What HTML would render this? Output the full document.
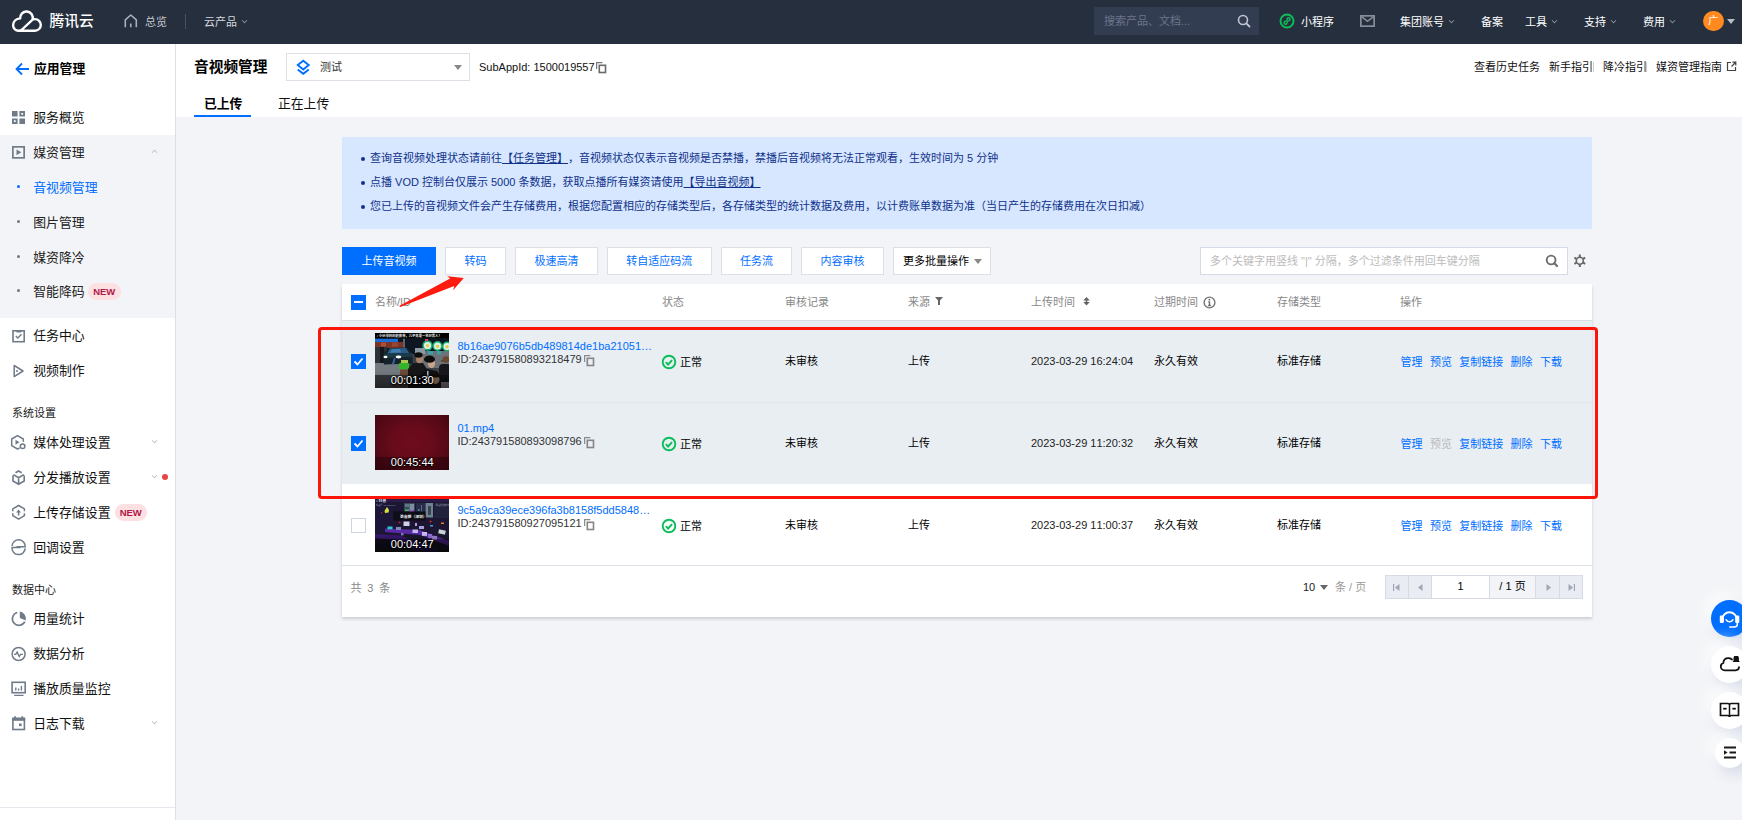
<!DOCTYPE html>
<html lang="zh-CN">
<head>
<meta charset="utf-8">
<title>音视频管理 - 云点播 - 控制台</title>
<style>
*{box-sizing:border-box;margin:0;padding:0}
html,body{width:1742px;height:820px;overflow:hidden}
body{font-family:"Liberation Sans","Noto Sans CJK SC",sans-serif;font-size:12px;color:#000;background:#f3f4f7;position:relative;line-height:1;text-spacing-trim:space-all;font-kerning:none}
a{text-decoration:none;color:#006eff}
.abs{position:absolute}
/* top nav */
#nav{position:absolute;left:0;top:0;width:1742px;height:43.600px;background:#262f3e;color:#fff}
#nav .t{position:absolute;top:0;height:44px;line-height:44px;font-size:11px;color:#e6e8ec;white-space:nowrap}
#nav .brand{font-size:14.700px;font-weight:500;color:#fff;left:49.500px;line-height:43px;letter-spacing:0}
#nav .sep{position:absolute;left:185px;top:14px;width:1px;height:15px;background:#4a5163}
#nav .caret{display:inline-block;width:5px;height:5px;border-right:1px solid #9aa0ad;border-bottom:1px solid #9aa0ad;transform:rotate(45deg) scale(.8);margin-left:5px;position:relative;top:-3px}
#search{position:absolute;left:1094px;top:7px;width:165px;height:28px;background:#333d52;color:#6c7589;font-size:11px;line-height:28px;padding-left:10px}
/* sidebar */
#side{position:absolute;left:0;top:44px;width:176px;height:776px;background:#fff;border-right:1px solid #dcdfe6}
#side .it{position:absolute;left:0;width:175px;height:35px;line-height:34px;font-size:12.900px;color:#111;white-space:nowrap}
#side .it span.tx{position:absolute;left:33.200px;top:0}
#side .it svg{position:absolute;left:11px;top:10px}
#side .grp{position:absolute;left:12px;font-size:11px;color:#222;white-space:nowrap}
#side .dot{position:absolute;left:16.500px;top:14.300px;width:3px;height:3px;background:#777;border-radius:2px}
.new{position:absolute;height:17px;border-radius:8.500px;background:#fce0e2;color:#b01848;font-size:9.500px;font-weight:bold;line-height:17px;text-align:center}
.chev{position:absolute;left:152px;top:12px;width:5px;height:5px;border-right:1.200px solid #b3b8c1;border-bottom:1.200px solid #b3b8c1;transform:rotate(45deg) scale(.8)}
/* header */
#hd{position:absolute;left:176px;top:44px;width:1566px;height:72.500px;background:#fff}
#hd .title{position:absolute;left:18px;top:13px;font-size:14.700px;font-weight:bold;color:#000;line-height:20px}
#sel{position:absolute;left:110px;top:9px;width:184px;height:28px;border:1px solid #dcdfe6;background:#fff}
#hd .tab{position:absolute;top:51px;font-size:12.800px;line-height:18px;color:#111}
#hd .lnk{position:absolute;top:16px;font-size:11px;line-height:14px;color:#111;white-space:nowrap}
</style>
</head>
<body>
<div id="nav">
  <svg class="abs" style="left:0;top:0" width="50" height="44" viewBox="0 0 50 44"><path d="M18.500 30.700H35A5.800 5.800 0 0 0 35 19.100C34 19.100 33.200 19.300 32.500 19.600A6.300 6.300 0 1 0 20.200 18.400C16.500 18.800 13.100 21.300 13.100 25.300A5.400 5.400 0 0 0 18.500 30.700C20.500 30.700 21.600 30 22.600 29L31.800 20.300" fill="none" stroke="#fff" stroke-width="2.400" stroke-linecap="round" stroke-linejoin="round"/></svg>
  <div class="t brand">腾讯云</div>
  <svg class="abs" style="left:120px;top:10px" width="22" height="22" viewBox="120 10 22 22"><path d="M125.300 27.200V19.800L130.800 15l5.500 4.800v7.400" fill="none" stroke="#a9afbb" stroke-width="1.600" stroke-linejoin="round"/><path d="M130.800 23.500v3.700" stroke="#a9afbb" stroke-width="1.600"/></svg>
  <div class="t" style="left:145px;font-size:11px;color:#c5c9d1">总览</div>
  <div class="sep"></div>
  <div class="t" style="left:204px;font-size:11px;color:#d5d8de">云产品<i class="caret"></i></div>
  <div id="search">搜索产品、文档...</div>
  <svg class="abs" style="left:1237px;top:14px" width="14" height="14" viewBox="0 0 14 14"><circle cx="6" cy="6" r="4.500" fill="none" stroke="#c0c5cf" stroke-width="1.600"/><path d="M9.300 9.300l3.200 3.200" stroke="#c0c5cf" stroke-width="1.800" stroke-linecap="round"/></svg>
  <svg class="abs" style="left:1278.500px;top:12.900px" width="16" height="16" viewBox="0 0 16 16"><circle cx="8" cy="8" r="6.500" fill="none" stroke="#0cbe58" stroke-width="1.900"/><path d="M9.600 7.800a1.500 1.500 0 1 0-1.500-1.500v3.400a1.500 1.500 0 1 1-1.500-1.500" fill="none" stroke="#0cbe58" stroke-width="1.400" stroke-linecap="round"/></svg>
  <div class="t" style="left:1301px;color:#fff">小程序</div>
  <svg class="abs" style="left:1360px;top:15px" width="15" height="12" viewBox="0 0 15 12"><rect x=".85" y=".85" width="13.300" height="10.300" fill="none" stroke="#858d99" stroke-width="1.700"/><path d="M1.500 1.700l6 4.600 6-4.600" fill="none" stroke="#858d99" stroke-width="1.600"/></svg>
  <div class="t" style="left:1400px;color:#fff">集团账号<i class="caret"></i></div>
  <div class="t" style="left:1481px;color:#fff">备案</div>
  <div class="t" style="left:1525px;color:#fff">工具<i class="caret"></i></div>
  <div class="t" style="left:1584px;color:#fff">支持<i class="caret"></i></div>
  <div class="t" style="left:1643px;color:#fff">费用<i class="caret"></i></div>
  <div class="abs" style="left:1703px;top:10.500px;width:20.500px;height:20.500px;border-radius:11px;background:#ff8a1f;color:#fff;font-size:10px;line-height:20px;text-align:center">广</div>
  <div class="abs" style="left:1727px;top:19px;width:0;height:0;border-left:4px solid transparent;border-right:4px solid transparent;border-top:5px solid #b9bdc7"></div>
</div>

<div id="side">
  <svg class="abs" style="left:0;top:0;z-index:2" width="40" height="776" viewBox="0 44 40 776">
    <g fill="#6f7b88" stroke="none">
      <path fill-rule="evenodd" d="M12 111h5.600v5.600H12zM19.400 111H25v5.600h-5.600zM21.300 112.900v1.800h1.800v-1.800zM12 118.400h5.600V124H12zM13.900 120.300v1.800h1.800v-1.800zM19.400 118.400H25V124h-5.600z"/>
      <path d="M16.500 149.500v5.700l4.800-2.850z"/>
      <rect x="16.400" y="330" width="5.200" height="2.400"/>
      <circle cx="17" cy="371" r="1"/>
      <path d="M15.500 439.800v5l4-2.500z"/>
      <path d="M16.200 512.400l2.400-2.900 2.400 2.900z"/>
      <path d="M19.800 611.600a7.200 7.200 0 0 1 6 8.800l-6-2.500z"/>
      <rect x="12.100" y="717.700" width="13.100" height="3.100"/>
      <rect x="14.100" y="716.300" width="1.800" height="3"/>
      <rect x="21.400" y="716.300" width="1.800" height="3"/>
      <rect x="19" y="723.500" width="2.600" height="2.600"/>
    </g>
    <g fill="none" stroke="#6f7b88" stroke-width="1.600">
      <rect x="12.850" y="146.850" width="11.300" height="11" stroke-width="1.700"/>
      <rect x="13" y="330.800" width="11.200" height="10.900"/>
      <path d="M15.800 336l2 2 3.700-3.700" stroke-width="1.400"/>
      <path d="M14.200 365.500v11.100L23 371z" stroke-width="1.500" stroke-linejoin="round"/>
      <path d="M19.600 448L17.500 449l-5.800-3.300V439l5.800-3.300 5.800 3.300v2.700" stroke-width="1.500" stroke-linejoin="round"/>
      <circle cx="22.600" cy="446.300" r="2.300" stroke-width="1.500"/>
      <path d="M15.500 472.800l3.100-1.800 3.100 1.800M13 475.500V481l5.600 3.300 5.600-3.300v-5.500M13.400 474.600l5.200 3.100 5.200-3.100M18.600 477.700V484"/>
      <path d="M12.800 511.300v-2.400l5.800-3.400 5.800 3.400v2.400M24.400 513.300v2.400l-5.800 3.400-5.800-3.400v-2.400" stroke-width="1.500" stroke-linejoin="round"/>
      <path d="M18.600 515.600v-4" stroke-width="1.500"/>
      <path d="M12 546a6.600 6.600 0 0 1 13.200.8H16.500M25.200 548.400a6.600 6.600 0 0 1-13.200-.8h8.700" stroke-width="1.500"/>
      <path d="M17.200 612.600a6.500 6.500 0 1 0 7.600 9"/>
      <circle cx="18.600" cy="654" r="6.500" stroke-width="1.500"/>
      <path d="M14 654.300h1.800l1.300-2.300 2.200 4.600 1.300-2.300h2.400" stroke-width="1.300"/>
      <rect x="12.100" y="682.300" width="13.100" height="10.400"/>
      <path d="M14.200 695.400h9.300M15.800 690.600v-3M18.600 690.600v-2M21.400 690.600v-4.600" stroke-width="1.400"/>
      <rect x="12.900" y="718.500" width="11.500" height="11"/>
    </g>
  </svg>
  <svg class="abs" style="left:14.500px;top:18px" width="15" height="14" viewBox="0 0 15 14"><path d="M7 1.500L1.500 7 7 12.500M1.500 7H14" fill="none" stroke="#006eff" stroke-width="1.800"/></svg>
  <div class="abs" style="left:34px;top:16px;font-size:12.800px;font-weight:bold;line-height:18px;color:#000">应用管理</div>

  <div class="it" style="top:56.600px"><span class="tx">服务概览</span></div>
  <div class="abs" style="left:0;top:90.700px;width:175px;height:183.500px;background:#f3f4f7"></div>
  <div class="it" style="top:91.600px"><span class="tx" style="color:#222">媒资管理</span><i class="chev" style="transform:rotate(225deg) scale(.8);top:14.500px"></i></div>
  <div class="it" style="top:126.600px"><i class="dot" style="background:#006eff"></i><span class="tx" style="color:#006eff">音视频管理</span></div>
  <div class="it" style="top:161.600px"><i class="dot"></i><span class="tx" style="color:#222">图片管理</span></div>
  <div class="it" style="top:196.600px"><i class="dot"></i><span class="tx" style="color:#222">媒资降冷</span></div>
  <div class="it" style="top:231px"><i class="dot"></i><span class="tx" style="color:#222">智能降码</span><span class="new" style="left:88px;top:8.200px;width:32.500px">NEW</span></div>

  <div class="it" style="top:275px"><span class="tx">任务中心</span></div>
  <div class="it" style="top:310px"><span class="tx">视频制作</span></div>

  <div class="grp" style="top:364px">系统设置</div>
  <div class="it" style="top:382px"><span class="tx">媒体处理设置</span><i class="chev"></i></div>
  <div class="it" style="top:417px"><span class="tx">分发播放设置</span><i class="chev"></i><i class="abs" style="left:162px;top:13.200px;width:5.800px;height:5.800px;border-radius:3px;background:#e54545"></i></div>
  <div class="it" style="top:452px"><span class="tx">上传存储设置</span><span class="new" style="left:114.500px;top:8.200px;width:32.500px">NEW</span></div>
  <div class="it" style="top:487px"><span class="tx">回调设置</span></div>

  <div class="grp" style="top:540.700px">数据中心</div>
  <div class="it" style="top:558px"><span class="tx">用量统计</span></div>
  <div class="it" style="top:593px"><span class="tx">数据分析</span></div>
  <div class="it" style="top:628px"><span class="tx">播放质量监控</span></div>
  <div class="it" style="top:663px"><span class="tx">日志下载</span><i class="chev"></i></div>
  <div class="abs" style="left:0;top:763px;width:175px;height:1px;background:#e6e8ed"></div>
</div>

<div id="hd">
  <div class="title">音视频管理</div>
  <div id="sel">
    <svg class="abs" style="left:8.300px;top:4.600px" width="16.500" height="16.500" viewBox="0 0 15 15"><path d="M7.500 1.500l5 4-5 4-5-4z" fill="none" stroke="#006eff" stroke-width="1.700" stroke-linejoin="miter"/><path d="M2.500 9.500l5 4 5-4" fill="none" stroke="#006eff" stroke-width="1.700"/></svg>
    <div class="abs" style="left:33px;top:6px;font-size:11px;line-height:14px;color:#333">测试</div>
    <div class="abs" style="left:167px;top:10.800px;width:0;height:0;border-left:4px solid transparent;border-right:4px solid transparent;border-top:5px solid #888"></div>
  </div>
  <div class="abs" style="left:303px;top:16px;font-size:11px;line-height:14px;color:#111;white-space:nowrap">SubAppId: 1500019557</div>
  <svg class="abs" style="left:420px;top:17.700px" width="11" height="12" viewBox="0 0 11 12"><path d="M.6 7V.6H6.300" fill="none" stroke="#777" stroke-width="1.200"/><rect x="3.300" y="3.300" width="6.200" height="7.200" fill="none" stroke="#6a6a6a" stroke-width="1.600"/></svg>
  <div class="tab" style="left:28px;font-weight:bold;color:#000">已上传</div>
  <div class="abs" style="left:18px;top:70.500px;width:57px;height:2.500px;background:#006eff"></div>
  <div class="tab" style="left:102px">正在上传</div>
  <div class="lnk" style="left:1298px">查看历史任务</div>
  <div class="lnk" style="left:1373px">新手指引</div>
  <div class="lnk" style="left:1427px">降冷指引</div>
  <div class="lnk" style="left:1480px">媒资管理指南</div>
  <div class="abs" style="left:1417px;top:18px;width:1px;height:10px;background:#ccc"></div>
  <div class="abs" style="left:1470px;top:18px;width:1px;height:10px;background:#ccc"></div>
  <svg class="abs" style="left:1550px;top:17px" width="11" height="11" viewBox="0 0 11 11"><path d="M5 1.500H1.500v8h8V6" fill="none" stroke="#444" stroke-width="1.200"/><path d="M6.500 1.200h3.300v3.300M9.500 1.500L5.500 5.500" fill="none" stroke="#444" stroke-width="1.200"/></svg>
</div>


<style>
#notice{position:absolute;left:342px;top:137px;width:1250px;height:91.500px;background:#d6e7ff;color:#12368f;font-size:11px}
#notice .ln{position:absolute;left:28px;line-height:14px;white-space:nowrap;color:#10318a}
#notice .ln:before{content:"";position:absolute;left:-9px;top:5.500px;width:4px;height:4px;border-radius:2px;background:#10318a}
#notice u{text-decoration:underline}
.btn{position:absolute;top:247px;height:28px;border:1px solid #dcdfe6;background:#fff;color:#006eff;font-size:11px;line-height:26px;text-align:center;white-space:nowrap}
#tbl{position:absolute;left:342px;top:284px;width:1250px;height:333px;background:#fff;box-shadow:0 2px 3px rgba(0,0,0,.16)}
.th{position:absolute;top:295px;font-size:11px;line-height:14px;color:#888;white-space:nowrap}
.row{position:absolute;left:342px;width:1250px}
.c{position:absolute;font-size:11px;line-height:14px;color:#000;white-space:nowrap}
.lk{color:#006eff}
.thumb{position:absolute;left:375px;width:74px;height:55px;overflow:hidden;background:#111}
.thumb .tm{position:absolute;left:0;bottom:0;width:74px;height:13.500px;background:rgba(0,0,0,.3);color:#fff;font-size:11px;line-height:11px;text-align:center;text-shadow:0 0 1px #000,0 0 2px #000,0 1px 1px #000;padding-left:.5px}
.cb{position:absolute;left:351px;width:15px;height:15px;background:#006eff}
.cp{position:absolute}
</style>
<div id="notice">
  <div class="ln" style="top:14px">查询音视频处理状态请前往<u>【任务管理】</u>，音视频状态仅表示音视频是否禁播，禁播后音视频将无法正常观看，生效时间为 5 分钟</div>
  <div class="ln" style="top:38px">点播 VOD 控制台仅展示 5000 条数据，获取点播所有媒资请使用<u>【导出音视频】</u></div>
  <div class="ln" style="top:62px">您已上传的音视频文件会产生存储费用，根据您配置相应的存储类型后，各存储类型的统计数据及费用，以计费账单数据为准（当日产生的存储费用在次日扣减）</div>
</div>

<div class="btn" style="left:342px;width:94px;background:#006eff;border-color:#006eff;color:#fff">上传音视频</div>
<div class="btn" style="left:445px;width:61px">转码</div>
<div class="btn" style="left:515px;width:83px">极速高清</div>
<div class="btn" style="left:607px;width:104.500px">转自适应码流</div>
<div class="btn" style="left:721px;width:71px">任务流</div>
<div class="btn" style="left:801px;width:83px">内容审核</div>
<div class="btn" style="left:893px;width:98px;color:#000;text-align:left;padding-left:9px">更多批量操作<i class="abs" style="left:80px;top:11px;width:0;height:0;border-left:4px solid transparent;border-right:4px solid transparent;border-top:5px solid #888"></i></div>

<div class="abs" style="left:1200px;top:247px;width:368px;height:28px;border:1px solid #d5dbe6;background:#fff;color:#bbb;font-size:11px;line-height:26px;padding-left:9px;white-space:nowrap">多个关键字用竖线 "|" 分隔，多个过滤条件用回车键分隔</div>
<svg class="abs" style="left:1545px;top:254px" width="14" height="14" viewBox="0 0 14 14"><circle cx="6.100" cy="6" r="4.400" fill="none" stroke="#6e6e6e" stroke-width="1.900"/><path d="M9.300 9.300l2.800 2.800" stroke="#6e6e6e" stroke-width="2.100" stroke-linecap="round"/></svg>
<svg class="abs" style="left:1572px;top:253px" width="16" height="16" viewBox="0 0 16 16"><g fill="none" stroke="#666" stroke-width="1.600"><circle cx="7.800" cy="7.800" r="3.500"/><path d="M7.800 1.600v2.400M7.800 11.600v2.400M2.400 4.700l2.100 1.200M11.100 9.700l2.100 1.200M2.400 10.900l2.100-1.200M11.100 5.900l2.100-1.200" stroke-width="2"/></g></svg>

<div id="tbl"></div>
<div class="abs" style="left:342px;top:319.500px;width:1250px;height:1px;background:#d9dde4"></div>
<div class="cb" style="top:294.700px"><i class="abs" style="left:3px;top:6px;width:9px;height:2px;background:#fff"></i></div>
<div class="th" style="left:375px">名称/ID</div>
<div class="th" style="left:662px">状态</div>
<div class="th" style="left:785px">审核记录</div>
<div class="th" style="left:908px">来源</div>
<svg class="abs" style="left:935px;top:296.500px" width="8" height="8" viewBox="0 0 8 8"><path d="M0 0h8L5 3.500V8H3V3.500z" fill="#666"/></svg>
<div class="th" style="left:1031px">上传时间</div>
<svg class="abs" style="left:1083px;top:297px" width="7" height="9" viewBox="0 0 7 9"><path d="M3.500 0L6.800 3.600H.2zM3.500 8.600L.2 5h6.600z" fill="#666"/><path d="M3.500 2v5" stroke="#666" stroke-width="1.600"/></svg>
<div class="th" style="left:1154px">过期时间</div>
<svg class="abs" style="left:1203px;top:295.500px" width="13" height="13" viewBox="0 0 13 13"><circle cx="6.500" cy="6.500" r="5.400" fill="none" stroke="#777" stroke-width="1.400"/><path d="M6.500 5.600v4M5.300 5.900h1.200M5.200 9.500h2.600" stroke="#666" stroke-width="1.300"/><circle cx="6.400" cy="3.700" r=".9" fill="#666"/></svg>
<div class="th" style="left:1277px">存储类型</div>
<div class="th" style="left:1400px">操作</div>
<div class="row" style="top:321px;height:81.5px;background:#e9eef3"></div>
<div class="cb" style="top:354px"><svg class="abs" style="left:2px;top:3px" width="11" height="9" viewBox="0 0 11 9"><path d="M1.500 4.500l3 3 5-6" fill="none" stroke="#fff" stroke-width="1.800"/></svg></div>
<div class="thumb" style="top:333px"><svg class="abs" style="left:0;top:0" width="74" height="55" viewBox="0 0 74 55">
<defs><filter id="b1" x="-5%" y="-5%" width="110%" height="110%"><feGaussianBlur stdDeviation=".55"/></filter>
<linearGradient id="g1" x1="0" y1="0" x2="0" y2="1"><stop offset="0" stop-color="#000" stop-opacity="0"/><stop offset="1" stop-color="#000" stop-opacity=".35"/></linearGradient>
<clipPath id="c1"><rect width="74" height="55"/></clipPath></defs>
<g clip-path="url(#c1)"><g filter="url(#b1)">
<rect width="74" height="55" fill="#3c4349"/>
<rect y="5" width="74" height="16" fill="#0c1420"/>
<rect x="0" y="5.600" width="23" height="3.600" fill="#1c6ed8"/>
<rect x="0" y="9" width="29" height="6" fill="#7a3426"/><rect x="6" y="9.500" width="5" height="4" fill="#a85034"/><rect x="17" y="9.500" width="6" height="4" fill="#9a4630"/>
<rect x="28" y="5.500" width="2" height="12" fill="#5a6470"/>
<rect x="45" y="18" width="29" height="17" fill="#6c7278"/>
<rect x="0" y="14" width="12" height="18" fill="#2a3138"/>
<rect x="5" y="14" width="4" height="17" fill="#15191d"/>
<circle cx="52.500" cy="12.500" r="5.200" fill="#18b070"/><circle cx="52.500" cy="12.500" r="3.600" fill="#dff2ea"/><circle cx="52.500" cy="12.800" r="1.800" fill="#e8cc50"/><rect x="50" y="6" width="3" height="2" fill="#e04060"/>
<circle cx="62.500" cy="13" r="5" fill="#18b070"/><circle cx="62.500" cy="13" r="3.500" fill="#dff2ea"/><circle cx="62.500" cy="13.300" r="1.800" fill="#e8cc50"/>
<circle cx="72" cy="13.500" r="5" fill="#18b070"/><circle cx="72" cy="13.500" r="3.500" fill="#dff2ea"/><circle cx="72" cy="13.800" r="1.800" fill="#e8cc50"/>
<rect x="53" y="18" width="5" height="3.500" fill="#3aa0a8"/><rect x="62" y="18" width="4" height="3.500" fill="#3aa0a8"/>
<rect x="40" y="15" width="10" height="6" fill="#8c98a4"/>
<rect x="66" y="27" width="5" height="1.500" fill="#4a4030"/>
<rect x="0" y="30" width="34" height="13" fill="#737a80"/>
<rect x="0" y="42" width="34" height="13" fill="#4c5054"/>
<path d="M8 21l6-6 18-.5 5 5 1 11-29 1z" fill="#13242c"/><path d="M9 21l28-1 .5 4-29 1z" fill="#1d3a4a"/>
<path d="M15 15.500l16-.5 3 5-22 .5z" fill="#2c5c86"/><path d="M17 16.200l8-.3 1 3.500-11 .3z" fill="#3f7fb5"/>
<ellipse cx="10.500" cy="24" rx="2" ry="1.200" fill="#fff"/><ellipse cx="23.500" cy="24" rx="2.800" ry="1.400" fill="#fff"/>
<path d="M17 31l2-6h1.500l-1.500 6z" fill="#3a6ab0"/>
<rect x="26" y="27" width="7" height="4" fill="#a8c850"/><rect x="24" y="30" width="10" height="6.500" rx="1" fill="#35b52c"/><rect x="25" y="36.500" width="8" height="6" fill="#6a4a38"/>
<path d="M33 55V36l5-6h10l4 6v19z" fill="#141618"/>
<ellipse cx="44.500" cy="26" rx="3.500" ry="4.200" fill="#a8836a"/><ellipse cx="43.500" cy="22" rx="4.200" ry="2.800" fill="#101010"/>
<path d="M44 55l2-15 6-4 10 2 4 6v11z" fill="#101214"/><rect x="52" y="38" width="1.500" height="7" fill="#b0b8c0"/>
<ellipse cx="56.500" cy="30.500" rx="3.600" ry="4.600" fill="#c8a48a"/><ellipse cx="54.500" cy="26.200" rx="5.500" ry="3.600" fill="#0c0c0c"/>
<rect x="64" y="31" width="12" height="20" rx="4" fill="#14161c"/><ellipse cx="71" cy="26.500" rx="3.500" ry="3.200" fill="#6a4a30"/>
<ellipse cx="60.500" cy="46.500" rx="4" ry="4.500" fill="#b89078"/><ellipse cx="60.500" cy="42.500" rx="4.200" ry="2" fill="#181210"/>
<rect x="66" y="49" width="8" height="6" fill="#8a8088"/>
<ellipse cx="24" cy="50" rx="9" ry="6" fill="#4a3e3c"/>
<rect y="38" width="74" height="17" fill="url(#g1)"/>
</g>
<rect width="74" height="5.300" fill="#000"/>
<text x="1.500" y="4.200" font-family="Liberation Sans,Noto Sans CJK SC,sans-serif" font-size="3.300" font-weight="bold" fill="#f4f4f4">♪ 小伙带妈妈逛夜市，儿子竟是一名好男人！</text>
</g></svg><div class="tm">00:01:30</div></div>
<div class="c lk" style="left:457.500px;top:339px">8b16ae9076b5db489814de1ba21051…</div>
<div class="c" style="left:457.500px;top:352px;color:#333">ID:243791580893218479</div>
<svg class="cp" style="left:584px;top:354.8px" width="11" height="12" viewBox="0 0 11 12"><path d="M.6 7V.6H6.300" fill="none" stroke="#8a8a8a" stroke-width="1.200"/><rect x="3.300" y="3.300" width="6.200" height="7.200" fill="none" stroke="#858585" stroke-width="1.600"/></svg>
<svg class="abs" style="left:661.200px;top:353.6px" width="16" height="16" viewBox="0 0 16 16"><circle cx="8" cy="8" r="6.300" fill="none" stroke="#0abf5b" stroke-width="1.900"/><path d="M4.800 8.200l2.300 2.300 4-4.400" fill="none" stroke="#0abf5b" stroke-width="1.900"/></svg>
<div class="c" style="left:680px;top:355px">正常</div>
<div class="c" style="left:785px;top:354px">未审核</div>
<div class="c" style="left:908px;top:354px">上传</div>
<div class="c" style="left:1031px;top:354px;color:#222">2023-03-29 16:24:04</div>
<div class="c" style="left:1154px;top:354px">永久有效</div>
<div class="c" style="left:1277px;top:354px">标准存储</div>
<div class="c lk" style="left:1400.4px;top:355px">管理</div>
<div class="c lk" style="left:1430px;top:355px">预览</div>
<div class="c lk" style="left:1459.3px;top:355px">复制链接</div>
<div class="c lk" style="left:1510.6px;top:355px">删除</div>
<div class="c lk" style="left:1540px;top:355px">下载</div>
<div class="abs" style="left:342px;top:401.500px;width:1250px;height:1px;background:#e1e5ec"></div>
<div class="row" style="top:402.5px;height:81.2px;background:#e9eef3"></div>
<div class="cb" style="top:436px"><svg class="abs" style="left:2px;top:3px" width="11" height="9" viewBox="0 0 11 9"><path d="M1.500 4.500l3 3 5-6" fill="none" stroke="#fff" stroke-width="1.800"/></svg></div>
<div class="thumb" style="top:415px"><div class="abs" style="left:0;top:0;width:74px;height:55px;background:radial-gradient(ellipse 75% 85% at 50% 50%,#6e0c1d 0,#680b1b 35%,#4f0814 75%,#35050d 100%)"></div><div class="tm">00:45:44</div></div>
<div class="c lk" style="left:457.500px;top:421px">01.mp4</div>
<div class="c" style="left:457.500px;top:434px;color:#333">ID:243791580893098796</div>
<svg class="cp" style="left:584px;top:436.8px" width="11" height="12" viewBox="0 0 11 12"><path d="M.6 7V.6H6.300" fill="none" stroke="#8a8a8a" stroke-width="1.200"/><rect x="3.300" y="3.300" width="6.200" height="7.200" fill="none" stroke="#858585" stroke-width="1.600"/></svg>
<svg class="abs" style="left:661.200px;top:435.6px" width="16" height="16" viewBox="0 0 16 16"><circle cx="8" cy="8" r="6.300" fill="none" stroke="#0abf5b" stroke-width="1.900"/><path d="M4.800 8.200l2.300 2.300 4-4.400" fill="none" stroke="#0abf5b" stroke-width="1.900"/></svg>
<div class="c" style="left:680px;top:437px">正常</div>
<div class="c" style="left:785px;top:436px">未审核</div>
<div class="c" style="left:908px;top:436px">上传</div>
<div class="c" style="left:1031px;top:436px;color:#222">2023-03-29 11:20:32</div>
<div class="c" style="left:1154px;top:436px">永久有效</div>
<div class="c" style="left:1277px;top:436px">标准存储</div>
<div class="c lk" style="left:1400.4px;top:437px">管理</div>
<div class="c lk" style="left:1430px;top:437px;color:#bbb">预览</div>
<div class="c lk" style="left:1459.3px;top:437px">复制链接</div>
<div class="c lk" style="left:1510.6px;top:437px">删除</div>
<div class="c lk" style="left:1540px;top:437px">下载</div>
<div class="cb" style="top:518px;background:#fff;border:1px solid #cfd5de"></div>
<div class="thumb" style="top:497px"><svg class="abs" style="left:0;top:0" width="74" height="55" viewBox="0 0 74 55">
<defs><filter id="b3" x="-5%" y="-5%" width="110%" height="110%"><feGaussianBlur stdDeviation=".55"/></filter>
<linearGradient id="g3" x1="0" y1="0" x2="0" y2="1"><stop offset="0" stop-color="#000" stop-opacity="0"/><stop offset="1" stop-color="#000" stop-opacity=".7"/></linearGradient>
<clipPath id="c3"><rect width="74" height="55"/></clipPath></defs>
<g clip-path="url(#c3)"><g filter="url(#b3)">
<rect width="74" height="55" fill="#1c1630"/>
<rect y="0" width="74" height="5" fill="#2a1e4a"/>
<rect x="0" y="5" width="18" height="30" fill="#1e1838"/>
<rect x="29" y="6" width="11" height="10" fill="#3c4660"/><rect x="30" y="7" width="4" height="3" fill="#5a7880"/><rect x="34.500" y="7" width="4.500" height="6" fill="#7a90a0"/><rect x="30" y="12.500" width="4" height="1.500" fill="#40c060"/><rect x="34.500" y="13" width="4" height="2" fill="#a050c0"/>
<rect x="41" y="6" width="9" height="12" fill="#2a2a48"/><rect x="46" y="8" width="1" height="8" fill="#5a60a0"/><rect x="43" y="12" width="1.500" height="2" fill="#30a070"/>
<rect x="50.500" y="6" width="7.500" height="14.500" fill="#6e8494"/><rect x="53" y="9" width="3" height="9" fill="#3a4450"/>
<rect x="59" y="6" width="15" height="15" fill="#22203c"/>
<path d="M9.500 14l2.500-4 2 3-.5 2.500-3.500.5z" fill="#d8e040"/>
<circle cx="6.500" cy="16" r=".7" fill="#e02030"/>
<rect x="18.500" y="14.500" width="32" height="9" fill="#0e0c16"/>
<circle cx="24.500" cy="25.500" r="1" fill="#c02020"/><circle cx="55.500" cy="24.500" r="1" fill="#d03020"/><rect x="66" y="25.500" width="3" height="1.500" fill="#e08030"/><rect x="55" y="28" width="3" height="1.500" fill="#40a0d0"/>
<path d="M10 31.500l35 1.500 29 11v5L45 38l-35-3z" fill="#5a2aa8"/>
<path d="M0 37l25 1.500L62 53v2H40L20 42.500 0 41z" fill="#3a1a78"/>
<rect x="12.500" y="29.500" width="5" height="2.800" fill="#30c8d0"/>
<rect x="21" y="30" width="5" height="3" fill="#8088c0"/>
<rect x="28.500" y="24.500" width="6" height="4.500" fill="#d0d0e8"/><rect x="40" y="26" width="2" height="3" fill="#b0a0e0"/>
<rect x="37.500" y="32.500" width="5.500" height="3.500" fill="#c0b8e8"/><rect x="44" y="29" width="5" height="3" fill="#a8a0d8"/>
<rect x="47" y="35" width="5" height="4" fill="#c8c0f0"/><rect x="53" y="37" width="4" height="4" fill="#9878e0"/>
<rect x="57" y="39" width="5" height="4" fill="#a890e0"/>
<rect x="63.500" y="33" width="7" height="4" fill="#c4d4d4" transform="rotate(12 67 35)"/>
<rect x="26" y="36" width="2.500" height="2.500" fill="#8078c0"/>
<rect y="36" width="74" height="19" fill="url(#g3)"/>
</g>
<text x="1" y="4.700" font-family="Liberation Sans,Noto Sans CJK SC,sans-serif" font-size="3.600" font-weight="bold" fill="#e8e8f0">♪ 抖音</text>
<text x="1" y="8.600" font-family="Liberation Sans,Noto Sans CJK SC,sans-serif" font-size="2.200" fill="#9a98b0">抖音号: 1047166714</text>
<text x="60.500" y="9" font-family="Liberation Sans,Noto Sans CJK SC,sans-serif" font-size="2.400" fill="#8a88a0">录音棚控制室</text>
<text x="25" y="21" font-family="Liberation Sans,Noto Sans CJK SC,sans-serif" font-size="3.800" font-weight="bold" fill="#f0f0f0">录音棚（深圳）</text>
</g></svg><div class="tm">00:04:47</div></div>
<div class="c lk" style="left:457.500px;top:503px">9c5a9ca39ece396fa3b8158f5dd5848…</div>
<div class="c" style="left:457.500px;top:516px;color:#333">ID:243791580927095121</div>
<svg class="cp" style="left:584px;top:518.8px" width="11" height="12" viewBox="0 0 11 12"><path d="M.6 7V.6H6.300" fill="none" stroke="#8a8a8a" stroke-width="1.200"/><rect x="3.300" y="3.300" width="6.200" height="7.200" fill="none" stroke="#858585" stroke-width="1.600"/></svg>
<svg class="abs" style="left:661.200px;top:517.6px" width="16" height="16" viewBox="0 0 16 16"><circle cx="8" cy="8" r="6.300" fill="none" stroke="#0abf5b" stroke-width="1.900"/><path d="M4.800 8.200l2.300 2.300 4-4.400" fill="none" stroke="#0abf5b" stroke-width="1.900"/></svg>
<div class="c" style="left:680px;top:519px">正常</div>
<div class="c" style="left:785px;top:518px">未审核</div>
<div class="c" style="left:908px;top:518px">上传</div>
<div class="c" style="left:1031px;top:518px;color:#222">2023-03-29 11:00:37</div>
<div class="c" style="left:1154px;top:518px">永久有效</div>
<div class="c" style="left:1277px;top:518px">标准存储</div>
<div class="c lk" style="left:1400.4px;top:519px">管理</div>
<div class="c lk" style="left:1430px;top:519px">预览</div>
<div class="c lk" style="left:1459.3px;top:519px">复制链接</div>
<div class="c lk" style="left:1510.6px;top:519px">删除</div>
<div class="c lk" style="left:1540px;top:519px">下载</div>
<div class="abs" style="left:342px;top:565px;width:1250px;height:1px;background:#dcdfe6"></div>
<div class="c" style="left:350.500px;top:581px;color:#888;letter-spacing:1.400px">共 3 条</div>
<div class="c" style="left:1303px;top:579.500px;color:#222">10</div>
<i class="abs" style="left:1320px;top:585px;width:0;height:0;border-left:4px solid transparent;border-right:4px solid transparent;border-top:5px solid #666"></i>
<div class="c" style="left:1335px;top:579.500px;color:#999">条 / 页</div>
<div class="abs" style="left:1385px;top:575px;width:198px;height:24px;border:1px solid #d5dae3;background:#e9edf3"></div>
<div class="abs" style="left:1408px;top:576px;width:1px;height:22px;background:#d5dae3"></div>
<div class="abs" style="left:1431px;top:576px;width:59px;height:22px;background:#fff;border-left:1px solid #d5dae3;border-right:1px solid #d5dae3;font-size:11px;line-height:21px;text-align:center;color:#000">1</div>
<div class="abs" style="left:1490px;top:576px;width:46px;height:22px;background:#f2f4f8;border-right:1px solid #d5dae3;font-size:11px;line-height:21px;text-align:center;color:#000">/ 1 页</div>
<div class="abs" style="left:1559px;top:576px;width:1px;height:22px;background:#d5dae3"></div>
<svg class="abs" style="left:1393px;top:583.500px" width="7" height="7" viewBox="0 0 7 7"><path d="M.6 0v7" stroke="#a0a6b3" stroke-width="1.200"/><path d="M6.500 0v7L2 3.500z" fill="#a0a6b3"/></svg>
<svg class="abs" style="left:1417px;top:583.500px" width="7" height="7" viewBox="0 0 7 7"><path d="M5.500 0v7L1 3.500z" fill="#a0a6b3"/></svg>
<svg class="abs" style="left:1545px;top:583.500px" width="7" height="7" viewBox="0 0 7 7"><path d="M1.500 0v7L6 3.500z" fill="#a0a6b3"/></svg>
<svg class="abs" style="left:1568px;top:583.500px" width="7" height="7" viewBox="0 0 7 7"><path d="M6.400 0v7" stroke="#a0a6b3" stroke-width="1.200"/><path d="M.5 0v7L5 3.500z" fill="#a0a6b3"/></svg>

<!-- annotation -->
<div class="abs" style="left:318px;top:327px;width:1280px;height:172px;border:3px solid #fd150a;border-radius:4px"></div>
<svg class="abs" style="left:390px;top:268px" width="90" height="45" viewBox="0 0 90 45"><path d="M9.100 38.100L60.100 10.400 57.100 8.200 73.800 9.900 63.100 22.200 64.200 18.100 10.200 39z" fill="#fd1a0f"/></svg>

<!-- floating buttons -->
<div class="abs" style="left:1711px;top:600px;width:37px;height:37px;border-radius:19px;background:#006eff;box-shadow:5px 6px 14px rgba(60,90,160,.17),-6px -6px 16px rgba(255,255,255,.85)"></div>
<svg class="abs" style="left:1716px;top:604px" width="26" height="28" viewBox="1716 604 26 28"><path d="M1722.300 619.500a7.200 7.200 0 0 1 14.400 0" fill="none" stroke="#fff" stroke-width="2"/><rect x="1719.800" y="615.600" width="4.100" height="7.400" rx="1.200" fill="#fff"/><rect x="1735.200" y="615.600" width="4.100" height="7.400" rx="1.200" fill="#fff"/><path d="M1726.200 619.800c1.500 2.600 5.100 2.600 6.600 0" fill="none" stroke="#fff" stroke-width="1.600" stroke-linecap="round"/><path d="M1737.300 622.500v2c0 1.500-1.300 2.400-3 2.400h-4.600" fill="none" stroke="#fff" stroke-width="1.500" stroke-linecap="round"/></svg>
<div class="abs" style="left:1711px;top:646px;width:37px;height:37px;border-radius:19px;background:#fff;box-shadow:5px 6px 14px rgba(60,90,160,.17),-6px -6px 16px rgba(255,255,255,.85)"></div>
<svg class="abs" style="left:1719px;top:656.200px" width="24" height="20" viewBox="0 0 24 20"><path d="M13 3.500C11.800 2.600 10.600 2.200 9.300 2.200 6.500 2.200 4.500 4.200 4.300 7 2.800 7.500 1.800 8.800 1.800 10.500c0 2.200 1.700 3.800 3.900 3.800h10.800c2 0 3.500-1.400 3.500-3.200" fill="none" stroke="#111" stroke-width="1.800" stroke-linecap="round"/><path d="M14.500 2.200a2.700 2.700 0 0 1 5.400 0v2.500l1 1.300h-7.400l1-1.300z" fill="#111"/></svg>
<div class="abs" style="left:1711px;top:692px;width:37px;height:37px;border-radius:19px;background:#fff;box-shadow:5px 6px 14px rgba(60,90,160,.17),-6px -6px 16px rgba(255,255,255,.85)"></div>
<svg class="abs" style="left:1719px;top:702px" width="22" height="18" viewBox="0 0 22 18"><path d="M1.500 1.500h7.500c.8 0 1.500.7 1.500 1.500 0-.8.700-1.500 1.500-1.500h7.500v12H12c-.8 0-1.500.7-1.500 1.500 0-.8-.7-1.500-1.500-1.500H1.500z" fill="none" stroke="#111" stroke-width="1.700"/><path d="M10.500 3v12" stroke="#111" stroke-width="1.500"/><rect x="4.200" y="5.800" width="3.400" height="1.800" fill="#111"/><rect x="13.400" y="5.800" width="3.400" height="1.800" fill="#111"/></svg>
<div class="abs" style="left:1715px;top:738px;width:30px;height:30px;border-radius:15px;background:#fff;box-shadow:5px 6px 14px rgba(60,90,160,.17),-6px -6px 16px rgba(255,255,255,.85)"></div>
<svg class="abs" style="left:1723px;top:746px" width="14" height="13" viewBox="0 0 14 13"><path d="M1 1.500h12M6.500 6.500H13M1 11.500h12" stroke="#1a1a1a" stroke-width="1.900"/><path d="M1 4.200v4.600l3.600-2.300z" fill="#1a1a1a"/></svg>


</body>
</html>
